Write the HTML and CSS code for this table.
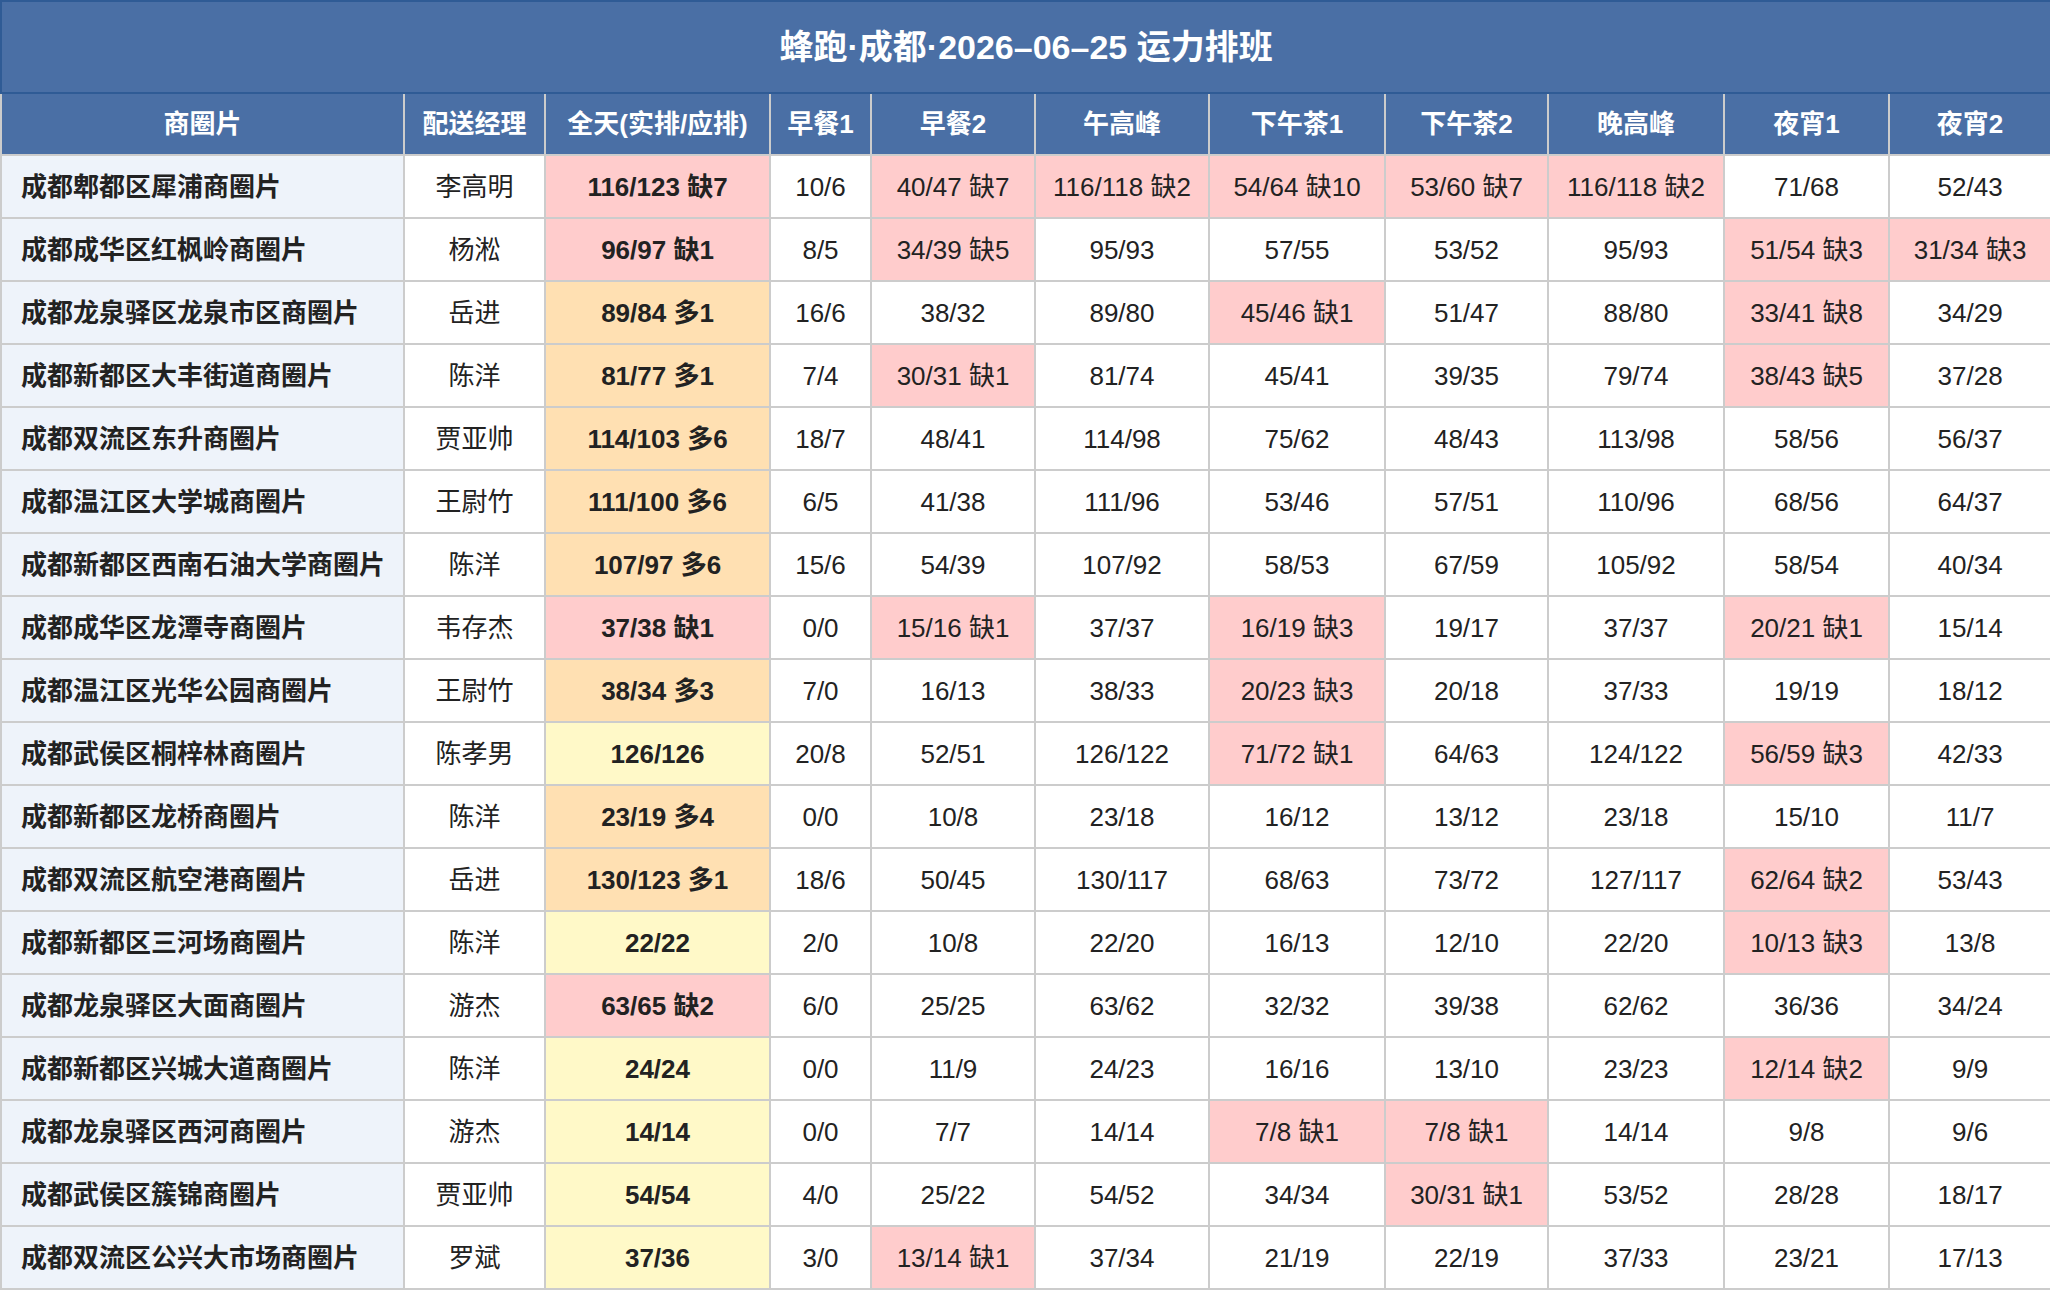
FILE: index.html
```html
<!DOCTYPE html>
<html lang="zh-CN">
<head>
<meta charset="utf-8">
<title>蜂跑·成都·2026-06-25 运力排班</title>
<link rel="stylesheet" href="styles.css">
</head>
<body>
<table class="sched">
  <colgroup>
    <col class="w-area"><col class="w-mgr"><col class="w-day"><col class="w-b1"><col class="w-b2"><col class="w-noon"><col class="w-t1"><col class="w-t2"><col class="w-eve"><col class="w-n1"><col class="w-n2">
  </colgroup>
  <thead>
    <tr class="title-row"><th colspan="11" class="title">蜂跑·成都·2026–06–25 运力排班</th></tr>
    <tr class="head-row">
      <th>商圈片</th><th>配送经理</th><th>全天(实排/应排)</th><th>早餐1</th><th>早餐2</th><th>午高峰</th><th>下午茶1</th><th>下午茶2</th><th>晚高峰</th><th>夜宵1</th><th>夜宵2</th>
    </tr>
  </thead>
  <tbody>
    <tr><td class="area">成都郫都区犀浦商圈片</td><td>李高明</td><td class="day short">116/123 缺7</td><td>10/6</td><td class="short">40/47 缺7</td><td class="short">116/118 缺2</td><td class="short">54/64 缺10</td><td class="short">53/60 缺7</td><td class="short">116/118 缺2</td><td>71/68</td><td>52/43</td></tr>
    <tr><td class="area">成都成华区红枫岭商圈片</td><td>杨淞</td><td class="day short">96/97 缺1</td><td>8/5</td><td class="short">34/39 缺5</td><td>95/93</td><td>57/55</td><td>53/52</td><td>95/93</td><td class="short">51/54 缺3</td><td class="short">31/34 缺3</td></tr>
    <tr><td class="area">成都龙泉驿区龙泉市区商圈片</td><td>岳进</td><td class="day over">89/84 多1</td><td>16/6</td><td>38/32</td><td>89/80</td><td class="short">45/46 缺1</td><td>51/47</td><td>88/80</td><td class="short">33/41 缺8</td><td>34/29</td></tr>
    <tr><td class="area">成都新都区大丰街道商圈片</td><td>陈洋</td><td class="day over">81/77 多1</td><td>7/4</td><td class="short">30/31 缺1</td><td>81/74</td><td>45/41</td><td>39/35</td><td>79/74</td><td class="short">38/43 缺5</td><td>37/28</td></tr>
    <tr><td class="area">成都双流区东升商圈片</td><td>贾亚帅</td><td class="day over">114/103 多6</td><td>18/7</td><td>48/41</td><td>114/98</td><td>75/62</td><td>48/43</td><td>113/98</td><td>58/56</td><td>56/37</td></tr>
    <tr><td class="area">成都温江区大学城商圈片</td><td>王尉竹</td><td class="day over">111/100 多6</td><td>6/5</td><td>41/38</td><td>111/96</td><td>53/46</td><td>57/51</td><td>110/96</td><td>68/56</td><td>64/37</td></tr>
    <tr><td class="area">成都新都区西南石油大学商圈片</td><td>陈洋</td><td class="day over">107/97 多6</td><td>15/6</td><td>54/39</td><td>107/92</td><td>58/53</td><td>67/59</td><td>105/92</td><td>58/54</td><td>40/34</td></tr>
    <tr><td class="area">成都成华区龙潭寺商圈片</td><td>韦存杰</td><td class="day short">37/38 缺1</td><td>0/0</td><td class="short">15/16 缺1</td><td>37/37</td><td class="short">16/19 缺3</td><td>19/17</td><td>37/37</td><td class="short">20/21 缺1</td><td>15/14</td></tr>
    <tr><td class="area">成都温江区光华公园商圈片</td><td>王尉竹</td><td class="day over">38/34 多3</td><td>7/0</td><td>16/13</td><td>38/33</td><td class="short">20/23 缺3</td><td>20/18</td><td>37/33</td><td>19/19</td><td>18/12</td></tr>
    <tr><td class="area">成都武侯区桐梓林商圈片</td><td>陈孝男</td><td class="day ok">126/126</td><td>20/8</td><td>52/51</td><td>126/122</td><td class="short">71/72 缺1</td><td>64/63</td><td>124/122</td><td class="short">56/59 缺3</td><td>42/33</td></tr>
    <tr><td class="area">成都新都区龙桥商圈片</td><td>陈洋</td><td class="day over">23/19 多4</td><td>0/0</td><td>10/8</td><td>23/18</td><td>16/12</td><td>13/12</td><td>23/18</td><td>15/10</td><td>11/7</td></tr>
    <tr><td class="area">成都双流区航空港商圈片</td><td>岳进</td><td class="day over">130/123 多1</td><td>18/6</td><td>50/45</td><td>130/117</td><td>68/63</td><td>73/72</td><td>127/117</td><td class="short">62/64 缺2</td><td>53/43</td></tr>
    <tr><td class="area">成都新都区三河场商圈片</td><td>陈洋</td><td class="day ok">22/22</td><td>2/0</td><td>10/8</td><td>22/20</td><td>16/13</td><td>12/10</td><td>22/20</td><td class="short">10/13 缺3</td><td>13/8</td></tr>
    <tr><td class="area">成都龙泉驿区大面商圈片</td><td>游杰</td><td class="day short">63/65 缺2</td><td>6/0</td><td>25/25</td><td>63/62</td><td>32/32</td><td>39/38</td><td>62/62</td><td>36/36</td><td>34/24</td></tr>
    <tr><td class="area">成都新都区兴城大道商圈片</td><td>陈洋</td><td class="day ok">24/24</td><td>0/0</td><td>11/9</td><td>24/23</td><td>16/16</td><td>13/10</td><td>23/23</td><td class="short">12/14 缺2</td><td>9/9</td></tr>
    <tr><td class="area">成都龙泉驿区西河商圈片</td><td>游杰</td><td class="day ok">14/14</td><td>0/0</td><td>7/7</td><td>14/14</td><td class="short">7/8 缺1</td><td class="short">7/8 缺1</td><td>14/14</td><td>9/8</td><td>9/6</td></tr>
    <tr><td class="area">成都武侯区簇锦商圈片</td><td>贾亚帅</td><td class="day ok">54/54</td><td>4/0</td><td>25/22</td><td>54/52</td><td>34/34</td><td class="short">30/31 缺1</td><td>53/52</td><td>28/28</td><td>18/17</td></tr>
    <tr><td class="area">成都双流区公兴大市场商圈片</td><td>罗斌</td><td class="day ok">37/36</td><td>3/0</td><td class="short">13/14 缺1</td><td>37/34</td><td>21/19</td><td>22/19</td><td>37/33</td><td>23/21</td><td>17/13</td></tr>
  </tbody>
</table>
</body>
</html>
```

FILE: styles.css
```css
html, body {
  margin: 0;
  padding: 0;
  background: #ffffff;
}

.sched {
  width: 2050px;
  table-layout: fixed;
  border-collapse: collapse;
  font-family: "Liberation Sans", "Noto Sans CJK SC", sans-serif;
  font-size: 26px;
  line-height: 32px;
  color: #222222;
}

.w-area { width: 403px; }
.w-mgr { width: 141px; }
.w-day { width: 225px; }
.w-b1 { width: 101px; }
.w-b2 { width: 164px; }
.w-noon { width: 174px; }
.w-t1 { width: 176px; }
.w-t2 { width: 163px; }
.w-eve { width: 176px; }
.w-n1 { width: 165px; }
.w-n2 { width: 162px; }

.sched th,
.sched td {
  border: 2px solid #cccccc;
  padding: 0 6px;
  text-align: center;
  vertical-align: middle;
  white-space: nowrap;
  overflow: hidden;
}

.title-row { height: 92px; }

.sched th.title {
  background: #4a6fa5;
  border: 2px solid #2f5b95;
  color: #ffffff;
  font-size: 34px;
  line-height: 40px;
  font-weight: bold;
}

.head-row { height: 62px; }

.head-row th {
  background: #4a6fa5;
  color: #ffffff;
  font-weight: bold;
  font-size: 26px;
}

.sched tbody tr { height: 63px; }

.sched td.area {
  background: #eef3fa;
  text-align: left;
  padding-left: 19px;
  font-weight: bold;
}

.sched td.day { font-weight: bold; }
.sched td.short { background: #ffcccc; }
.sched td.over { background: #ffe0b2; }
.sched td.ok { background: #fff9c8; }
```
